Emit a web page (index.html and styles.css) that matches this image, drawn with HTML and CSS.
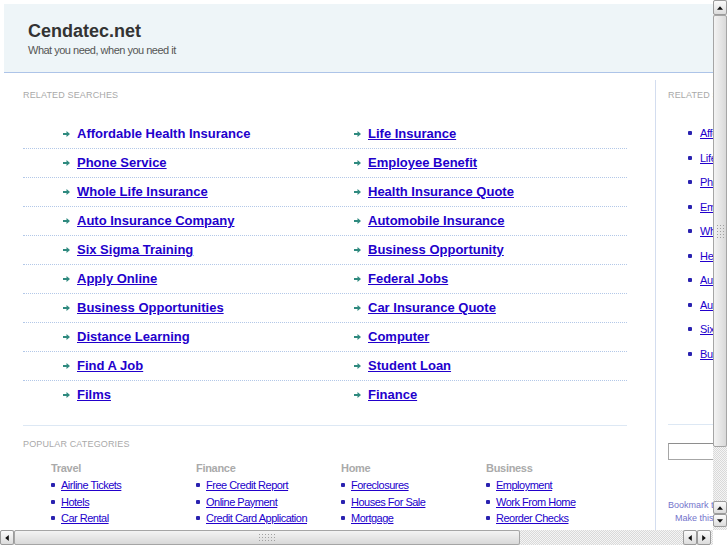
FILE: index.html
```html
<!DOCTYPE html>
<html lang="en">
<head>
<meta charset="UTF-8">
<meta name="viewport" content="width=device-width, initial-scale=1.0">
<title>Cendatec.net</title>
<link rel="stylesheet" href="styles.css">
</head>
<body>

<div class="window">

  <div class="viewport">
    <div class="page">

      <div class="top">
        <h1 class="site">Cendatec.net</h1>
        <p class="tagline">What you need, when you need it</p>
      </div>

      <div class="main">
        <div class="content">
          <h2 class="label">Related Searches</h2>

          <div class="searches">
            <div class="row">
              <span class="term"><svg class="arrow" viewBox="0 0 7 6"><path d="M0 2h3.5V0L7 3 3.5 6V4H0z"/></svg><a href="#" class="hot">Affordable Health Insurance</a></span>
              <span class="term"><svg class="arrow" viewBox="0 0 7 6"><path d="M0 2h3.5V0L7 3 3.5 6V4H0z"/></svg><a href="#">Life Insurance</a></span>
            </div>
            <div class="row">
              <span class="term"><svg class="arrow" viewBox="0 0 7 6"><path d="M0 2h3.5V0L7 3 3.5 6V4H0z"/></svg><a href="#">Phone Service</a></span>
              <span class="term"><svg class="arrow" viewBox="0 0 7 6"><path d="M0 2h3.5V0L7 3 3.5 6V4H0z"/></svg><a href="#">Employee Benefit</a></span>
            </div>
            <div class="row">
              <span class="term"><svg class="arrow" viewBox="0 0 7 6"><path d="M0 2h3.5V0L7 3 3.5 6V4H0z"/></svg><a href="#">Whole Life Insurance</a></span>
              <span class="term"><svg class="arrow" viewBox="0 0 7 6"><path d="M0 2h3.5V0L7 3 3.5 6V4H0z"/></svg><a href="#">Health Insurance Quote</a></span>
            </div>
            <div class="row">
              <span class="term"><svg class="arrow" viewBox="0 0 7 6"><path d="M0 2h3.5V0L7 3 3.5 6V4H0z"/></svg><a href="#">Auto Insurance Company</a></span>
              <span class="term"><svg class="arrow" viewBox="0 0 7 6"><path d="M0 2h3.5V0L7 3 3.5 6V4H0z"/></svg><a href="#">Automobile Insurance</a></span>
            </div>
            <div class="row">
              <span class="term"><svg class="arrow" viewBox="0 0 7 6"><path d="M0 2h3.5V0L7 3 3.5 6V4H0z"/></svg><a href="#">Six Sigma Training</a></span>
              <span class="term"><svg class="arrow" viewBox="0 0 7 6"><path d="M0 2h3.5V0L7 3 3.5 6V4H0z"/></svg><a href="#">Business Opportunity</a></span>
            </div>
            <div class="row">
              <span class="term"><svg class="arrow" viewBox="0 0 7 6"><path d="M0 2h3.5V0L7 3 3.5 6V4H0z"/></svg><a href="#">Apply Online</a></span>
              <span class="term"><svg class="arrow" viewBox="0 0 7 6"><path d="M0 2h3.5V0L7 3 3.5 6V4H0z"/></svg><a href="#">Federal Jobs</a></span>
            </div>
            <div class="row">
              <span class="term"><svg class="arrow" viewBox="0 0 7 6"><path d="M0 2h3.5V0L7 3 3.5 6V4H0z"/></svg><a href="#">Business Opportunities</a></span>
              <span class="term"><svg class="arrow" viewBox="0 0 7 6"><path d="M0 2h3.5V0L7 3 3.5 6V4H0z"/></svg><a href="#">Car Insurance Quote</a></span>
            </div>
            <div class="row">
              <span class="term"><svg class="arrow" viewBox="0 0 7 6"><path d="M0 2h3.5V0L7 3 3.5 6V4H0z"/></svg><a href="#">Distance Learning</a></span>
              <span class="term"><svg class="arrow" viewBox="0 0 7 6"><path d="M0 2h3.5V0L7 3 3.5 6V4H0z"/></svg><a href="#">Computer</a></span>
            </div>
            <div class="row">
              <span class="term"><svg class="arrow" viewBox="0 0 7 6"><path d="M0 2h3.5V0L7 3 3.5 6V4H0z"/></svg><a href="#">Find A Job</a></span>
              <span class="term"><svg class="arrow" viewBox="0 0 7 6"><path d="M0 2h3.5V0L7 3 3.5 6V4H0z"/></svg><a href="#">Student Loan</a></span>
            </div>
            <div class="row">
              <span class="term"><svg class="arrow" viewBox="0 0 7 6"><path d="M0 2h3.5V0L7 3 3.5 6V4H0z"/></svg><a href="#">Films</a></span>
              <span class="term"><svg class="arrow" viewBox="0 0 7 6"><path d="M0 2h3.5V0L7 3 3.5 6V4H0z"/></svg><a href="#">Finance</a></span>
            </div>
          </div>

          <div class="popular">
            <h2 class="label">Popular Categories</h2>
            <div class="cats">
              <div class="cat">
                <h3>Travel</h3>
                <ul>
                  <li><a href="#">Airline Tickets</a></li>
                  <li><a href="#">Hotels</a></li>
                  <li><a href="#">Car Rental</a></li>
                </ul>
              </div>
              <div class="cat">
                <h3>Finance</h3>
                <ul>
                  <li><a href="#">Free Credit Report</a></li>
                  <li><a href="#">Online Payment</a></li>
                  <li><a href="#">Credit Card Application</a></li>
                </ul>
              </div>
              <div class="cat">
                <h3>Home</h3>
                <ul>
                  <li><a href="#">Foreclosures</a></li>
                  <li><a href="#">Houses For Sale</a></li>
                  <li><a href="#">Mortgage</a></li>
                </ul>
              </div>
              <div class="cat">
                <h3>Business</h3>
                <ul>
                  <li><a href="#">Employment</a></li>
                  <li><a href="#">Work From Home</a></li>
                  <li><a href="#">Reorder Checks</a></li>
                </ul>
              </div>
            </div>
          </div>
        </div>

        <div class="side">
          <h2 class="label">Related Searches</h2>
          <ul class="side-list">
            <li><a href="#">Affordable Health Insurance</a></li>
            <li><a href="#">Life Insurance</a></li>
            <li><a href="#">Phone Service</a></li>
            <li><a href="#">Employee Benefit</a></li>
            <li><a href="#">Whole Life Insurance</a></li>
            <li><a href="#">Health Insurance Quote</a></li>
            <li><a href="#">Auto Insurance Company</a></li>
            <li><a href="#">Automobile Insurance</a></li>
            <li><a href="#">Six Sigma Training</a></li>
            <li><a href="#">Business Opportunity</a></li>
          </ul>
          <div class="side-rule"></div>
          <input class="search" type="text">
          <div class="bookmarks">
            <div class="bookmark">Bookmark this page</div>
            <div class="bookmark indent">Make this your homepage</div>
          </div>
        </div>
      </div>

    </div>
  </div>

  <!-- scrollbars -->
  <div class="vbar">
    <span class="btn first"><svg viewBox="0 0 5 3"><polygon points="0,3 2.5,0 5,3"/></svg></span>
    <span class="thumb"><i class="grip"></i></span>
    <span class="trough"></span>
    <span class="btn"><svg viewBox="0 0 5 3"><polygon points="0,3 2.5,0 5,3"/></svg></span>
    <span class="btn"><svg viewBox="0 0 5 3"><polygon points="0,0 5,0 2.5,3"/></svg></span>
    <span class="trough tail"></span>
  </div>

  <div class="hbar">
    <span class="btn first"><svg viewBox="0 0 3 5"><polygon points="3,0 0,2.5 3,5"/></svg></span>
    <span class="thumb"><i class="grip"></i></span>
    <span class="trough"></span>
    <span class="btn"><svg viewBox="0 0 3 5"><polygon points="3,0 0,2.5 3,5"/></svg></span>
    <span class="btn"><svg viewBox="0 0 3 5"><polygon points="0,0 3,2.5 0,5"/></svg></span>
    <span class="trough tail"></span>
  </div>

  <div class="corner"></div>

</div>

</body>
</html>
```

FILE: styles.css
```css
* {
  box-sizing: border-box;
  margin: 0;
  padding: 0;
}

html, body {
  width: 100%;
  height: 100%;
  overflow: hidden;
  background: #fff;
}

body {
  font-family: "Liberation Sans", Arial, sans-serif;
  color: #333;
}

a {
  color: #2200cc;
}

.window {
  display: grid;
  grid-template-columns: 713px 14px;
  grid-template-rows: 530px 15px;
}

.viewport {
  overflow: hidden;
}

.page {
  width: 985px;
  padding: 4px 4px 0 4px;
}

/* header */

.top {
  background: #eef5f8;
  border-bottom: 1px solid #adc4e8;
  padding: 16px 24px 15px;
}

.site {
  font-size: 18px;
  line-height: 22px;
  font-weight: bold;
  color: #333;
}

.tagline {
  margin-top: 2px;
  font-size: 11px;
  line-height: 13px;
  letter-spacing: -0.5px;
  color: #555;
}

/* columns */

.main {
  display: flex;
  margin-top: 7px;
}

.content {
  width: 652px;
  flex-shrink: 0;
  padding: 10px 28px 30px 19px;
  border-right: 1px solid #d3ddef;
}

.label {
  font-size: 9px;
  line-height: 11px;
  font-weight: normal;
  letter-spacing: 0.15px;
  text-transform: uppercase;
  color: #a9a9a9;
}

.searches {
  margin-top: 19px;
}

.row {
  display: grid;
  grid-template-columns: 291px 1fr;
  height: 29px;
  padding-left: 40px;
  align-items: center;
  border-bottom: 1px dotted #b3c8e8;
}

.row:last-child {
  border-bottom: none;
  height: 28px;
}

.term {
  display: flex;
  align-items: center;
  gap: 7px;
}

.term a {
  font-size: 13px;
  font-weight: bold;
  line-height: 16px;
}

.term a.hot {
  text-decoration: none;
}

.arrow {
  width: 7px;
  height: 6px;
  fill: #2f8a7f;
  flex-shrink: 0;
}

.popular {
  margin-top: 16px;
  border-top: 1px solid #dde8f4;
  padding-top: 13px;
}

.cats {
  display: grid;
  grid-template-columns: repeat(4, 145px);
  padding-left: 28px;
  margin-top: 11px;
}

.cat h3 {
  font-size: 11px;
  line-height: 14px;
  letter-spacing: -0.3px;
  color: #aaa;
  margin-bottom: 2px;
}

.cat ul, .side-list {
  list-style: none;
}

.cat li {
  display: flex;
  align-items: center;
  gap: 6px;
  height: 16.5px;
  font-size: 11px;
  letter-spacing: -0.5px;
  white-space: nowrap;
}

.cat li::before, .side-list li::before {
  content: "";
  width: 4px;
  height: 4px;
  border-radius: 1px;
  background: #2a22b0;
  flex-shrink: 0;
}

/* right sidebar */

.side {
  width: 320px;
  padding: 10px 0 0 12px;
  white-space: nowrap;
}

.side-list {
  margin-top: 20px;
  padding-left: 20px;
}

.side-list li {
  display: flex;
  align-items: center;
  gap: 8px;
  height: 24.5px;
  font-size: 11px;
  letter-spacing: -0.3px;
}

.side-rule {
  margin-top: 58px;
  width: 200px;
  border-top: 1px solid #dde8f4;
}

.search {
  display: block;
  margin-top: 18px;
  width: 160px;
  height: 17px;
  border: 1px solid #a6a6a6;
  border-top-color: #8e8e8e;
  background: #fff;
}

.bookmarks {
  margin-top: 39px;
}

.bookmark {
  font-size: 9px;
  line-height: 13px;
  color: #7474cc;
}

.indent {
  padding-left: 7px;
}

/* scrollbars */

.vbar, .hbar {
  display: flex;
  background: repeating-conic-gradient(#d9d9d9 0 25%, #f5f5f5 0 50%) 0 0 / 2px 2px;
}

.vbar {
  flex-direction: column;
}

.btn {
  display: flex;
  align-items: center;
  justify-content: center;
  flex-shrink: 0;
  background: linear-gradient(#fbfbfb, #dcdcdc);
  border: 1px solid #9b9b9b;
  border-radius: 2px;
}

.vbar .btn {
  height: 13px;
}

.vbar .btn.first {
  height: 15px;
}

.hbar .btn {
  width: 14px;
}

.btn svg {
  fill: #111;
}

.vbar .btn svg {
  width: 6px;
  height: 4px;
}

.hbar .btn svg {
  width: 4px;
  height: 6px;
}

.thumb {
  display: flex;
  align-items: center;
  justify-content: center;
  flex-shrink: 0;
  border: 1px solid #a5a5a5;
  border-radius: 2px;
}

.vbar .thumb {
  height: 432px;
  background: linear-gradient(to right, #f3f3f3, #d9d9d9);
}

.hbar .thumb {
  width: 506px;
  background: linear-gradient(#f3f3f3, #d9d9d9);
}

.grip {
  background: radial-gradient(circle, #a0a0a0 0.7px, transparent 0.9px) 0 0 / 3px 3px;
}

.vbar .grip {
  width: 9px;
  height: 15px;
}

.hbar .grip {
  width: 18px;
  height: 9px;
}

.trough {
  flex: 1;
}

.vbar .tail {
  flex: 0 0 3px;
}

.hbar .tail {
  flex: 0 0 2px;
}

.corner {
  background: #fff;
}
```
